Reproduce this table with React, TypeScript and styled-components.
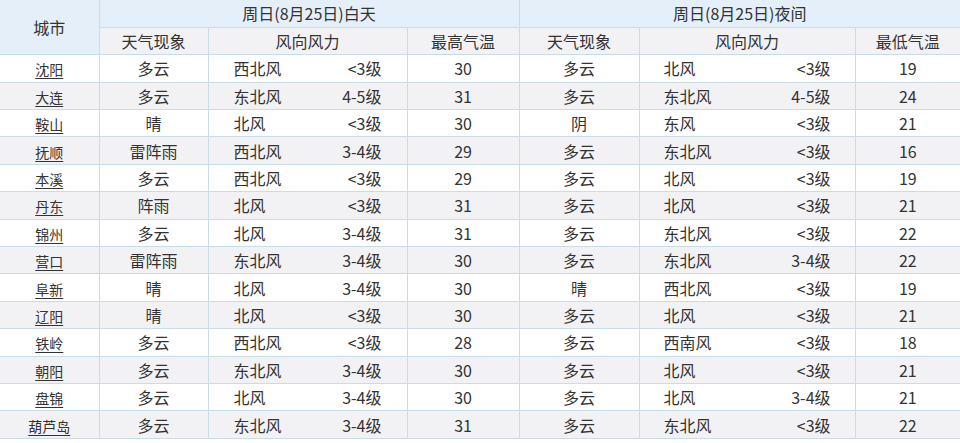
import React from 'react';
import styled, { createGlobalStyle } from 'styled-components';

const GlobalStyle = createGlobalStyle`
  html, body {
    margin: 0;
    padding: 0;
    background: #ffffff;
  }
  body {
    font-family: "Noto Sans CJK SC", "Noto Sans", sans-serif;
    color: #333333;
  }
`;

const Table = styled.table`
  width: 960px;
  border-collapse: collapse;
  table-layout: fixed;
  font-size: 16px;
  color: #333333;
`;

const HeadRow = styled.tr<{ top?: boolean }>`
  height: 27.4px;
  background: ${({ top }) => (top ? '#e4eff9' : '#f2f2f4')};
`;

const HeadCell = styled.th<{ top?: boolean }>`
  font-weight: normal;
  padding: 0;
  line-height: 1;
  text-align: center;
  background: ${({ top }) => (top ? '#e4eff9' : '#f2f2f4')};
  border: 1px solid #c9dde9;
  border-top: none;
  &:first-child { border-left: none; }
  &:last-child { border-right: none; }
`;

const Row = styled.tr<{ alt: boolean }>`
  height: 27.4px;
  background: ${({ alt }) => (alt ? '#f2f2f5' : '#ffffff')};
`;

const Cell = styled.td`
  padding: 0;
  line-height: 1;
  text-align: center;
  border: 1px solid #c9dde9;
  &:first-child { border-left: none; }
  &:last-child { border-right: none; }
`;

const CityLink = styled.a`
  font-size: 14px;
  color: #333333;
  text-decoration: underline;
  text-underline-offset: 3px;
`;

const Wind = styled.div<{ pad: number }>`
  display: flex;
  justify-content: space-between;
  padding: 0 ${({ pad }) => pad}px;
`;

type Day = {
  city: string;
  dw: string; dd: string; dg: string; hi: number;
  nw: string; nd: string; ng: string; lo: number;
};

const rows: Day[] = [
  { city: '沈阳', dw: '多云', dd: '西北风', dg: '<3级', hi: 30, nw: '多云', nd: '北风', ng: '<3级', lo: 19 },
  { city: '大连', dw: '多云', dd: '东北风', dg: '4-5级', hi: 31, nw: '多云', nd: '东北风', ng: '4-5级', lo: 24 },
  { city: '鞍山', dw: '晴', dd: '北风', dg: '<3级', hi: 30, nw: '阴', nd: '东风', ng: '<3级', lo: 21 },
  { city: '抚顺', dw: '雷阵雨', dd: '西北风', dg: '3-4级', hi: 29, nw: '多云', nd: '东北风', ng: '<3级', lo: 16 },
  { city: '本溪', dw: '多云', dd: '西北风', dg: '<3级', hi: 29, nw: '多云', nd: '北风', ng: '<3级', lo: 19 },
  { city: '丹东', dw: '阵雨', dd: '北风', dg: '<3级', hi: 31, nw: '多云', nd: '北风', ng: '<3级', lo: 21 },
  { city: '锦州', dw: '多云', dd: '北风', dg: '3-4级', hi: 31, nw: '多云', nd: '东北风', ng: '<3级', lo: 22 },
  { city: '营口', dw: '雷阵雨', dd: '东北风', dg: '3-4级', hi: 30, nw: '多云', nd: '东北风', ng: '3-4级', lo: 22 },
  { city: '阜新', dw: '晴', dd: '北风', dg: '3-4级', hi: 30, nw: '晴', nd: '西北风', ng: '<3级', lo: 19 },
  { city: '辽阳', dw: '晴', dd: '北风', dg: '<3级', hi: 30, nw: '多云', nd: '北风', ng: '<3级', lo: 21 },
  { city: '铁岭', dw: '多云', dd: '西北风', dg: '<3级', hi: 28, nw: '多云', nd: '西南风', ng: '<3级', lo: 18 },
  { city: '朝阳', dw: '多云', dd: '东北风', dg: '3-4级', hi: 30, nw: '多云', nd: '北风', ng: '<3级', lo: 21 },
  { city: '盘锦', dw: '多云', dd: '北风', dg: '3-4级', hi: 30, nw: '多云', nd: '北风', ng: '3-4级', lo: 21 },
  { city: '葫芦岛', dw: '多云', dd: '东北风', dg: '3-4级', hi: 31, nw: '多云', nd: '东北风', ng: '<3级', lo: 22 },
];

const App: React.FC = () => {
  return (
    <>
      <GlobalStyle />
      <Table>
        <colgroup>
          <col style={{ width: 99 }} />
          <col style={{ width: 109 }} />
          <col style={{ width: 199 }} />
          <col style={{ width: 112 }} />
          <col style={{ width: 120 }} />
          <col style={{ width: 216 }} />
          <col style={{ width: 105 }} />
        </colgroup>
        <thead>
          <HeadRow top>
            <HeadCell top rowSpan={2}>城市</HeadCell>
            <HeadCell top colSpan={3}>周日(8月25日)白天</HeadCell>
            <HeadCell top colSpan={3}>周日(8月25日)夜间</HeadCell>
          </HeadRow>
          <HeadRow>
            <HeadCell>天气现象</HeadCell>
            <HeadCell>风向风力</HeadCell>
            <HeadCell>最高气温</HeadCell>
            <HeadCell>天气现象</HeadCell>
            <HeadCell>风向风力</HeadCell>
            <HeadCell>最低气温</HeadCell>
          </HeadRow>
        </thead>
        <tbody>
          {rows.map((r, i) => (
            <Row key={r.city} alt={i % 2 === 1}>
              <Cell><CityLink href="#">{r.city}</CityLink></Cell>
              <Cell>{r.dw}</Cell>
              <Cell>
                <Wind pad={25}><span>{r.dd}</span><span>{r.dg}</span></Wind>
              </Cell>
              <Cell>{r.hi}</Cell>
              <Cell>{r.nw}</Cell>
              <Cell>
                <Wind pad={24}><span>{r.nd}</span><span>{r.ng}</span></Wind>
              </Cell>
              <Cell>{r.lo}</Cell>
            </Row>
          ))}
        </tbody>
      </Table>
    </>
  );
};

export default App;
